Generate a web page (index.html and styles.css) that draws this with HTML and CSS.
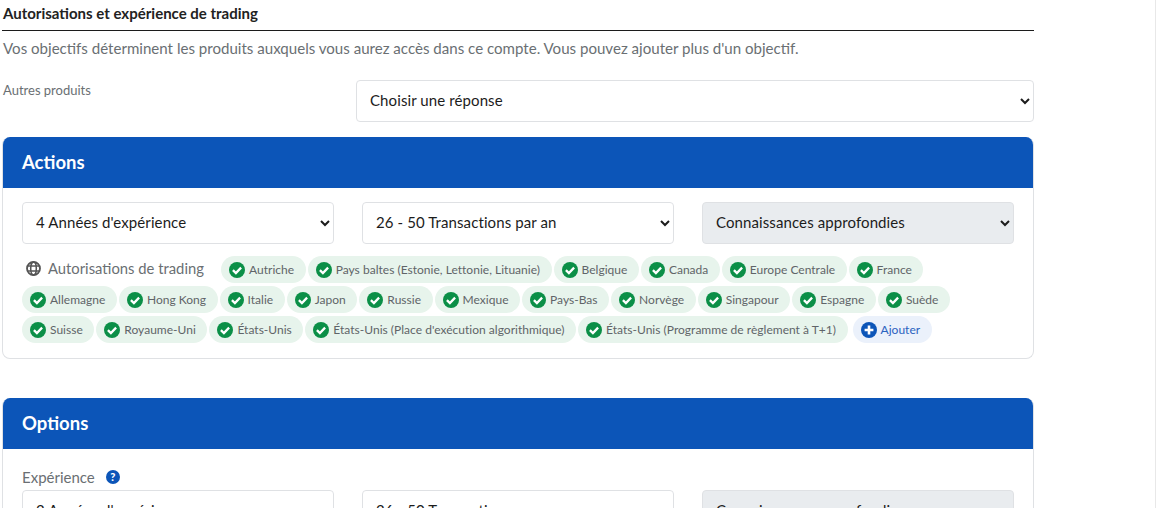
FILE: index.html
```html
<!DOCTYPE html>
<html lang="fr">
<head>
<meta charset="utf-8">
<title>Autorisations et expérience de trading</title>
<link rel="stylesheet" href="styles.css">
</head>
<body>
<svg class="sprite" width="0" height="0" aria-hidden="true">
  <symbol id="check" viewBox="0 0 16 16"><circle cx="8" cy="8" r="8" fill="#0b8f47"/><path d="M3.9 8.1 6.9 11l5.2-5.4" fill="none" stroke="#fff" stroke-width="2.3"/></symbol>
  <symbol id="plus" viewBox="0 0 16 16"><circle cx="8" cy="8" r="8" fill="#0c55b8"/><path d="M8 3.6v8.8M3.6 8h8.8" fill="none" stroke="#fff" stroke-width="2.6"/></symbol>
</svg>
<main class="page">
  <h2 class="section-title">Autorisations et expérience de trading</h2>
  <p class="intro">Vos objectifs déterminent les produits auxquels vous aurez accès dans ce compte. Vous pouvez ajouter plus d'un objectif.</p>
  <div class="form-row">
    <label class="form-label">Autres produits</label>
    <select class="field"><option>Choisir une réponse</option></select>
  </div>

  <section class="card">
    <h3 class="card-head">Actions</h3>
    <div class="card-body">
      <div class="fields">
        <select class="field"><option>4 Années d'expérience</option></select>
        <select class="field"><option>26 - 50 Transactions par an</option></select>
        <select class="field field-muted"><option>Connaissances approfondies</option></select>
      </div>
      <div class="tags">
        <span class="legend">
          <svg class="globe" viewBox="0 0 16 16"><circle cx="8" cy="8" r="6.9" fill="none" stroke="#555" stroke-width="2"/><ellipse cx="8" cy="8" rx="3" ry="6.9" fill="none" stroke="#555" stroke-width="1.7"/><path d="M1 5.4h14M1 10.6h14" stroke="#555" stroke-width="1.7"/></svg>
          Autorisations de trading
        </span>
        <span class="tag"><svg class="ico"><use href="#check"/></svg>Autriche</span>
        <span class="tag"><svg class="ico"><use href="#check"/></svg>Pays baltes (Estonie, Lettonie, Lituanie)</span>
        <span class="tag"><svg class="ico"><use href="#check"/></svg>Belgique</span>
        <span class="tag"><svg class="ico"><use href="#check"/></svg>Canada</span>
        <span class="tag"><svg class="ico"><use href="#check"/></svg>Europe Centrale</span>
        <span class="tag"><svg class="ico"><use href="#check"/></svg>France</span>
        <span class="tag"><svg class="ico"><use href="#check"/></svg>Allemagne</span>
        <span class="tag"><svg class="ico"><use href="#check"/></svg>Hong Kong</span>
        <span class="tag"><svg class="ico"><use href="#check"/></svg>Italie</span>
        <span class="tag"><svg class="ico"><use href="#check"/></svg>Japon</span>
        <span class="tag"><svg class="ico"><use href="#check"/></svg>Russie</span>
        <span class="tag"><svg class="ico"><use href="#check"/></svg>Mexique</span>
        <span class="tag"><svg class="ico"><use href="#check"/></svg>Pays-Bas</span>
        <span class="tag"><svg class="ico"><use href="#check"/></svg>Norvège</span>
        <span class="tag"><svg class="ico"><use href="#check"/></svg>Singapour</span>
        <span class="tag"><svg class="ico"><use href="#check"/></svg>Espagne</span>
        <span class="tag"><svg class="ico"><use href="#check"/></svg>Suède</span>
        <span class="tag"><svg class="ico"><use href="#check"/></svg>Suisse</span>
        <span class="tag"><svg class="ico"><use href="#check"/></svg>Royaume-Uni</span>
        <span class="tag"><svg class="ico"><use href="#check"/></svg>États-Unis</span>
        <span class="tag"><svg class="ico"><use href="#check"/></svg>États-Unis (Place d'exécution algorithmique)</span>
        <span class="tag"><svg class="ico"><use href="#check"/></svg>États-Unis (Programme de règlement à T+1)</span>
        <span class="tag tag-add"><svg class="ico"><use href="#plus"/></svg>Ajouter</span>
      </div>
    </div>
  </section>

  <section class="card card-options">
    <h3 class="card-head">Options</h3>
    <div class="card-body options-body">
      <div class="exp-label">Expérience <span class="help">?</span></div>
      <div class="fields">
        <select class="field"><option>2 Années d'expérience</option></select>
        <select class="field"><option>26 - 50 Transactions par an</option></select>
        <select class="field field-muted"><option>Connaissances approfondies</option></select>
      </div>
    </div>
  </section>
</main>
</body>
</html>
```
FILE: styles.css
```css
* { box-sizing: border-box; }
html, body { height: 100%; }
body {
  margin: 0;
  height: 508px;
  overflow: hidden;
  background: #fff;
  color: #1c1c1c;
  font-family: "Lato", "Liberation Sans", sans-serif;
}
.sprite { position: absolute; }
.page {
  width: 1156px;
  height: 508px;
  padding: 5px 121px 0 2px;
  border-right: 1px solid #e8e8e8;
  overflow: hidden;
}
.section-title {
  margin: 0;
  height: 26px;
  padding-left: 1px;
  border-bottom: 1px solid #1c1c1c;
  font-size: 15px;
  line-height: 16px;
  font-weight: 700;
  color: #222;
}
.intro {
  margin: 7px 0 0;
  padding-left: 1px;
  font-size: 15.08px;
  line-height: 20px;
  color: #6a6f73;
}
.form-row {
  display: flex;
  margin-top: 22px;
}
.form-label {
  width: 354px;
  padding-left: 1px;
  font-size: 13px;
  line-height: 20px;
  color: #6a6f73;
}
.form-row .field { flex: 1; }
.field {
  display: block;
  width: 100%;
  height: 42px;
  padding: 0 9px 2px;
  border: 1px solid #dfe1e4;
  border-radius: 4px;
  background-color: #fff;
  color: #1c1c1c;
  font-family: inherit;
  font-size: 15px;
  letter-spacing: 0.1px;
}
.field-muted { background-color: #e9ecef; }
.card {
  margin-top: 15px;
  border: 1px solid #dfe1e4;
  border-top: 0;
  border-radius: 8px;
  overflow: hidden;
}
.card-options { margin-top: 39px; height: 140px; }
.card-head {
  margin: 0 -1px;
  height: 51px;
  padding: 0 20px;
  background: #0c55b8;
  color: #fff;
  font-size: 18.5px;
  line-height: 50px;
  font-weight: 700;
}
.card-body { padding: 14px 19px 15px; }
.options-body { padding-top: 18px; }
.fields {
  display: grid;
  grid-template-columns: repeat(3, 1fr);
  gap: 28px;
}
.tags {
  display: flex;
  flex-wrap: wrap;
  gap: 3px 2px;
  margin-top: 12px;
}
.legend {
  display: inline-flex;
  align-items: center;
  gap: 7px;
  width: 197px;
  padding: 0 0 3px 4px;
  font-size: 14.8px;
  color: #6a6f73;
}
.globe { width: 15px; height: 15px; flex: none; }
.tag {
  display: inline-flex;
  align-items: center;
  gap: 4px;
  height: 27px;
  padding: 0 11.5px 0 8px;
  border-radius: 14px;
  background: #e7f4ec;
  color: #5f6468;
  font-size: 12px;
  letter-spacing: 0.02px;
}
.tag-add {
  margin-left: 3px;
  background: #ebf1fb;
  color: #2a62c0;
}
.ico { width: 16px; height: 16px; flex: none; }
.exp-label {
  display: flex;
  align-items: center;
  gap: 11px;
  height: 20px;
  margin-bottom: 3px;
  font-size: 15px;
  color: #6a6f73;
}
.help {
  width: 14px;
  height: 14px;
  border-radius: 50%;
  background: #0c55b8;
  color: #fff;
  font-size: 11px;
  line-height: 14px;
  font-weight: 900;
  text-align: center;
}
```
